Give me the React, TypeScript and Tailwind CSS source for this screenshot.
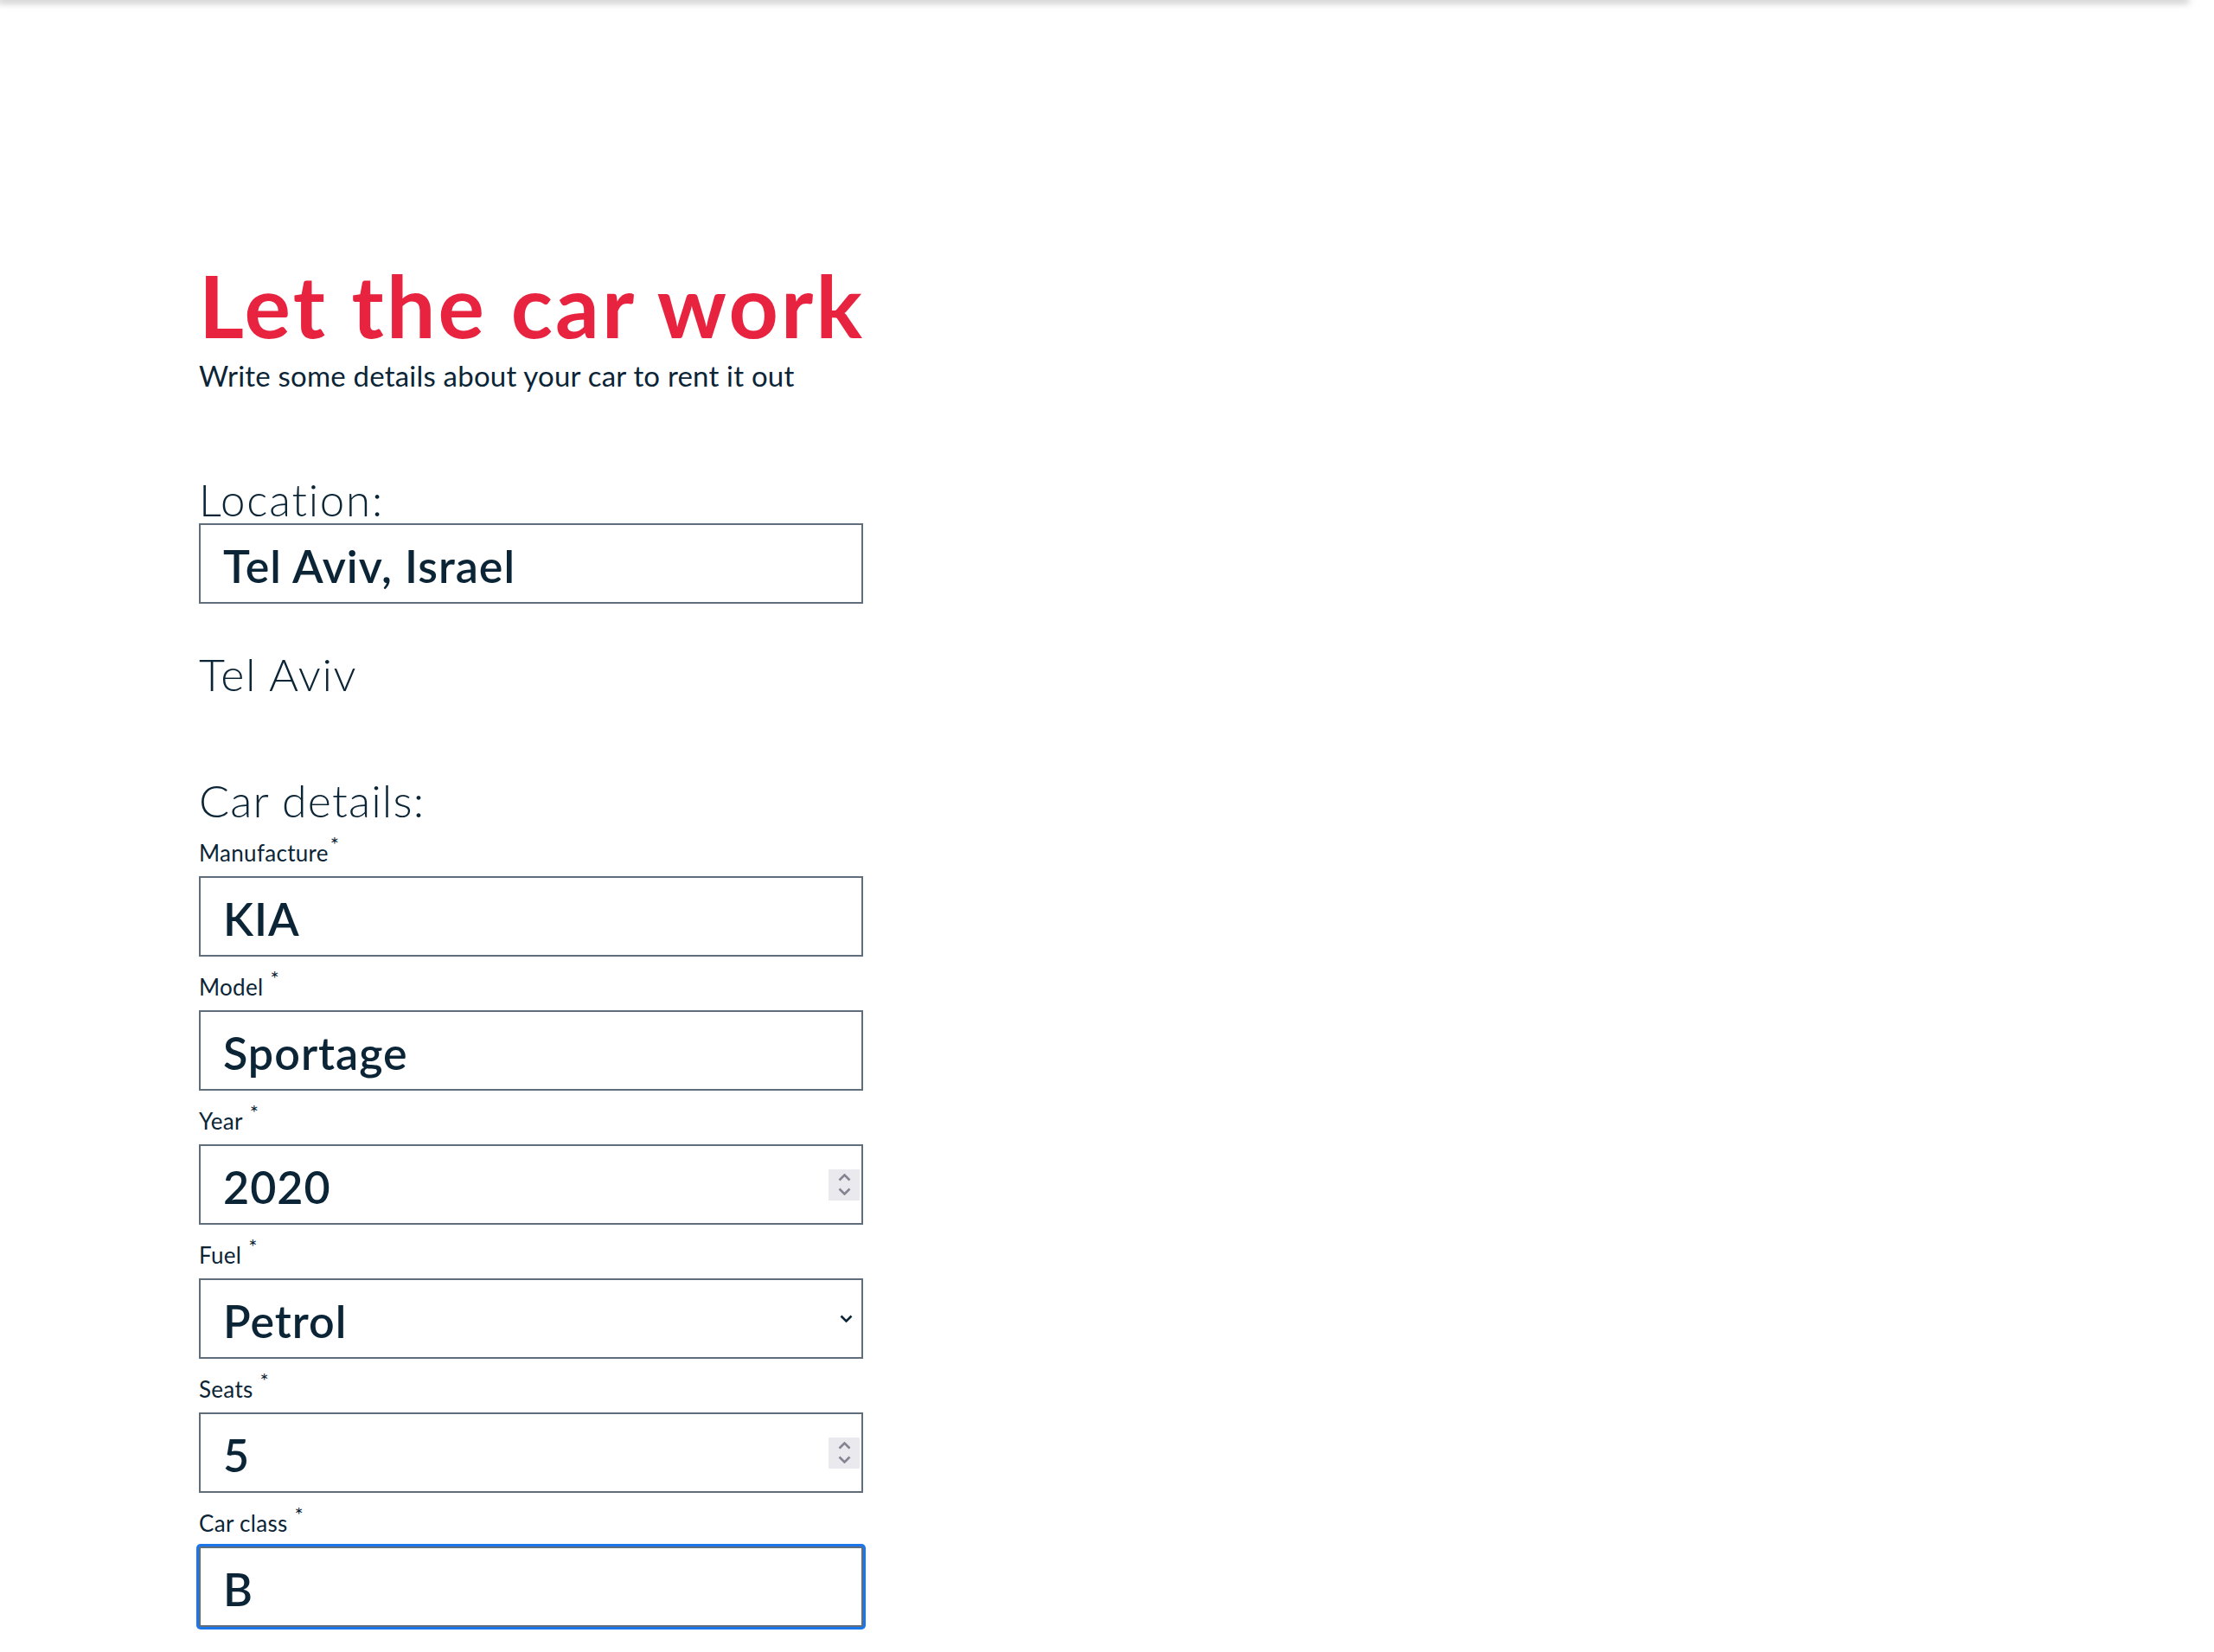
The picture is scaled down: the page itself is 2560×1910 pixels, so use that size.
import { ReactNode } from "react"

const navy = "text-[#0b2537]"

function Label({ children, star = true, gap = true }: { children: ReactNode; star?: boolean; gap?: boolean }) {
  return (
    <div className={`h-[26px] text-[26px] leading-none tracking-[0.3px] ${navy} mt-[22px] mb-[14px] flex items-start`}>
      <span>{children}</span>
      {star && <span className={`text-[24px] leading-none -mt-[9px] ${gap ? "ml-[8px]" : "ml-[2px]"}`}>*</span>}
    </div>
  )
}

function Field({ value, right, focused }: { value: string; right?: ReactNode; focused?: boolean }) {
  return (
    <div
      className={`h-[93px] w-[768px] border-2 border-[#5f6e7a] bg-white flex items-start pl-[26px] pr-[2px] pt-[21px] ${
        focused ? "ring-[3px] ring-[#1b76ec] rounded-[2px]" : ""
      }`}
    >
      <div className={`flex-1 text-[52px] leading-none font-semibold tracking-[1px] ${navy}`}>{value}</div>
      {right}
    </div>
  )
}

function Spinner() {
  return (
    <div className="w-[36px] h-[36px] bg-[#e9e9ee] self-center -mt-[21px] flex flex-col items-center justify-center gap-[7px]">
      <svg width="15" height="9" viewBox="0 0 15 9" fill="none">
        <path d="M1.5 7.5l6-6 6 6" stroke="#858592" strokeWidth="2.6" />
      </svg>
      <svg width="15" height="9" viewBox="0 0 15 9" fill="none">
        <path d="M1.5 1.5l6 6 6-6" stroke="#858592" strokeWidth="2.6" />
      </svg>
    </div>
  )
}

function Chevron() {
  return (
    <div className="self-center -mt-[21px] mr-[8px]">
      <svg width="15" height="9" viewBox="0 0 15 9" fill="none">
        <path d="M1.5 1.5l6 6 6-6" stroke="#0b2537" strokeWidth="2.6" />
      </svg>
    </div>
  )
}

export default function App() {
  return (
    <div className="min-h-screen bg-white" style={{ fontFamily: "Lato, 'Open Sans', sans-serif" }}>
      <div className="h-0 w-[2528px] shadow-[0_0_9px_3px_rgba(0,0,0,0.28)]" />

      <main className="ml-[230px] w-[768px] pt-[302px] pb-[40px]">
        <h1 className="text-[100px] leading-none font-bold text-[#e8233f] tracking-[3.2px] whitespace-nowrap">
          Let the car work
        </h1>
        <p className={`mt-[16px] text-[33px] leading-none tracking-[0.2px] ${navy}`}>
          Write some details about your car to rent it out
        </p>

        <h2 className={`mt-[101px] text-[51px] leading-none font-light tracking-[1.8px] ${navy}`}>Location:</h2>
        <div className="mt-[2px]">
          <Field value="Tel Aviv, Israel" />
        </div>
        <p className={`mt-[55px] text-[52px] leading-none font-light tracking-[1.6px] ${navy}`}>Tel Aviv</p>

        <h2 className={`mt-[94px] text-[52px] leading-none font-light tracking-[1.1px] ${navy}`}>Car details:</h2>

        <Label gap={false}>Manufacture</Label>
        <Field value="KIA" />

        <Label>Model</Label>
        <Field value="Sportage" />

        <Label>Year</Label>
        <Field value="2020" right={<Spinner />} />

        <Label>Fuel</Label>
        <Field value="Petrol" right={<Chevron />} />

        <Label>Seats</Label>
        <Field value="5" right={<Spinner />} />

        <Label>Car class</Label>
        <Field value="B" focused />
      </main>
    </div>
  )
}
